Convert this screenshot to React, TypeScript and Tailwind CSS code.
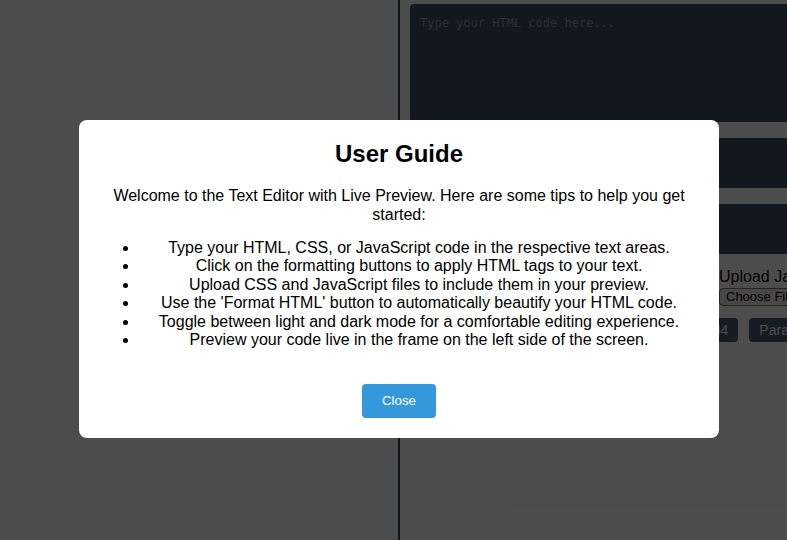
import { useState } from 'react';

const tips = [
  'Type your HTML, CSS, or JavaScript code in the respective text areas.',
  'Click on the formatting buttons to apply HTML tags to your text.',
  'Upload CSS and JavaScript files to include them in your preview.',
  "Use the 'Format HTML' button to automatically beautify your HTML code.",
  'Toggle between light and dark mode for a comfortable editing experience.',
  'Preview your code live in the frame on the left side of the screen.',
];

const tools = ['Italic', 'Underline', 'H1', 'H2', 'H3', 'H4', 'Para', 'Link'];

export default function App() {
  const [showGuide, setShowGuide] = useState(true);

  return (
    <div className="relative h-[540px] w-[787px] overflow-hidden bg-white font-['Liberation_Sans',Arial,sans-serif] text-black">
      <div className="flex h-full">
        {/* preview frame */}
        <div className="h-full w-[400px] shrink-0 border-r-2 border-[#36495c] bg-white" />

        {/* editor side */}
        <div className="flex min-w-0 flex-1 flex-col overflow-hidden pl-[10px] pt-1">
          <textarea
            placeholder="Type your HTML code here..."
            className="h-[118px] w-[400px] shrink-0 resize-none rounded bg-[#3a5068] px-[10px] py-[10px] font-['DejaVu_Sans_Mono',monospace] text-[12px] text-white placeholder:text-[#8c9daa]"
          />
          <textarea
            className="mt-4 h-[50px] w-[400px] shrink-0 resize-none rounded bg-[#3a5068] px-[10px] py-[10px] font-['DejaVu_Sans_Mono',monospace] text-[12px] text-white"
          />
          <textarea
            className="mt-4 h-[50px] w-[400px] shrink-0 resize-none rounded bg-[#3a5068] px-[10px] py-[10px] font-['DejaVu_Sans_Mono',monospace] text-[12px] text-white"
          />

          <div className="mt-[14px] flex">
            <div className="w-[309px] shrink-0" />
            <div className="flex shrink-0 flex-col items-start">
              <label className="whitespace-nowrap text-[16px] leading-[18px]">Upload JavaScript:</label>
              <span className="mt-[2px] whitespace-nowrap rounded-sm border border-[#767676] bg-[#efefef] px-[6px] text-[13px] leading-[16px]">Choose File</span>
            </div>
          </div>

          <div className="-ml-[7px] mt-3 flex gap-[11px]">
            {tools.map((t) => (
              <button
                key={t}
                className="h-6 shrink-0 rounded bg-[#435a72] px-[10px] text-[14px] text-white"
              >
                {t}
              </button>
            ))}
          </div>
        </div>
      </div>

      {showGuide && (
        <div className="absolute inset-0 bg-black/70">
          <div className="ml-[79px] mt-[120px] w-[640px] rounded-lg bg-white px-5 pb-5 pt-5 text-center">
            <h2 className="text-[24px] font-bold leading-[27.6px]">User Guide</h2>
            <p className="mt-[19.5px] text-[16px] leading-[18.4px]">
              Welcome to the Text Editor with Live Preview. Here are some tips to help you get started:
            </p>
            <ul className="mt-[15px] list-disc pl-10 text-[16px] leading-[18.4px]">
              {tips.map((tip) => (
                <li key={tip}>{tip}</li>
              ))}
            </ul>
            <button
              onClick={() => setShowGuide(false)}
              className="mt-[35px] h-[34px] rounded-[4px] bg-[#3498db] px-5 text-[13.33px] text-white"
            >
              Close
            </button>
          </div>
        </div>
      )}
    </div>
  );
}
